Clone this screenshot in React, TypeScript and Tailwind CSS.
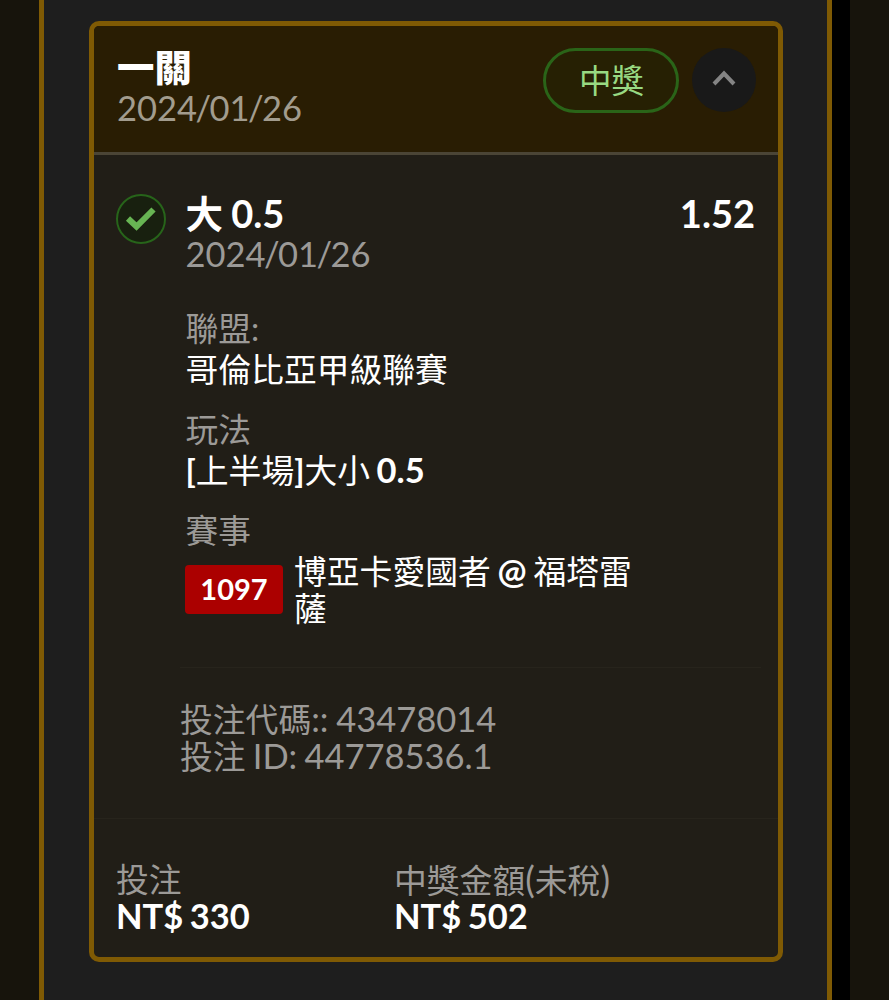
import type { ReactNode } from "react";

const Cjk = ({ children, className = "text-[32.8px]" }: { children: ReactNode; className?: string }) => (
  <span className={className}>{children}</span>
);

function DateText() {
  return (
    <>
      2024<span className="-ml-[1.5px] tracking-[-1.7px]">/</span>01<span className="-ml-[1.5px] tracking-[-1.7px]">/</span>26
    </>
  );
}

function Field({ label, children }: { label: string; children: ReactNode }) {
  return (
    <div className="mb-[20px]">
      <div className="h-[41px] whitespace-pre text-[32.8px] leading-[41px] text-[#9c9a97]">{label}</div>
      <div className="h-[40px] whitespace-pre leading-[40px] text-white">{children}</div>
    </div>
  );
}

function Amount({ label, value }: { label: ReactNode; value: string }) {
  return (
    <div>
      <div className="h-[37px] text-[32.8px] leading-[37px] whitespace-pre text-[#9c9a97]">{label}</div>
      <div className="h-[36px] text-[34.5px] leading-[36px] font-bold whitespace-pre text-white [word-spacing:-2px]">{value}</div>
    </div>
  );
}

export default function App() {
  return (
    <div className="flex h-[1000px] w-[889px] overflow-hidden bg-[#17140c] text-[34.5px] [font-family:Lato,'Noto_Sans_CJK_TC',sans-serif]">
      <div className="ml-[39px] w-[793px] shrink-0 border-x-[5px] border-[#7f5a04] bg-[#1e1e1e] pt-[21px] pl-[45px]">
        <section className="flex h-[941px] w-[694px] flex-col overflow-hidden rounded-[10px] border-[5px] border-[#7f5a04] bg-[#211e17]">
          <header className="flex h-[129px] shrink-0 items-start border-b-[3px] border-[#4b4536] bg-[#291d03] pl-[23px]">
            <div className="w-[426px] pt-[21px]">
              <div className="h-[41px] text-[37.4px] leading-[42px] font-black text-white">一關</div>
              <div className="h-[40px] leading-[40px] text-[#a29c8e]"><DateText /></div>
            </div>
            <div className="mt-[22px] flex h-[65px] w-[136px] items-center justify-center rounded-full border-[3px] border-[#2a6418] bg-[#262003] pl-px text-[32.5px] leading-[60px] text-[#98d982]">
              中獎
            </div>
            <div className="mt-[22px] ml-[13px] flex size-[64px] items-center justify-center rounded-full bg-[#191919]">
              <svg className="mb-[4px]" width="24" height="18" viewBox="0 0 24 18" fill="none" stroke="#848484" strokeWidth="4">
                <path d="M2 15 12 4.5 22 15" />
              </svg>
            </div>
          </header>

          <div className="flex h-[512px] shrink-0 pt-[38px] pl-[22px]">
            <div className="mt-px flex size-[50px] shrink-0 items-center justify-center rounded-full border-2 border-[#27641a] bg-[#18200f]">
              <svg width="32" height="28" viewBox="0 0 32 28" fill="none" stroke="#67b553" strokeWidth="6">
                <path d="M3 13.5 11.5 21.5 28.5 4.5" />
              </svg>
            </div>
            <div className="ml-[19.5px] w-[569.5px]">
              <div className="flex h-[41px] items-baseline justify-between text-[38px] leading-[41px] font-bold text-white">
                <span className="whitespace-pre [word-spacing:-1px]"><Cjk className="text-[37.5px]">大</Cjk> 0.5</span>
                <span>1.52</span>
              </div>
              <div className="mb-[34px] h-[40px] leading-[40px] text-[#9c9a97]"><DateText /></div>
              <Field label="聯盟:"><Cjk>哥倫比亞甲級聯賽</Cjk></Field>
              <Field label="玩法">
                <b className="text-[32.8px] font-bold">[</b><Cjk>上半場</Cjk><b className="text-[32.8px] font-bold">]</b><Cjk>大小</Cjk><b className="[word-spacing:-2px]"> 0.5</b>
              </Field>
              <div className="h-[41px] text-[32.7px] leading-[41px] text-[#9c9a97]">賽事</div>
              <div className="flex items-start">
                <div className="mt-[13.5px] -ml-[0.5px] flex h-[49px] w-[98px] items-center justify-center rounded-[4px] bg-[#ab0000] text-[29px] font-bold text-white">
                  1097
                </div>
                <div className="mt-[2px] ml-[11px] w-[350px] text-[32.8px] leading-[37px] whitespace-pre text-white">
                  博亞卡愛國者<b className="text-[34.5px] leading-none [word-spacing:-1.6px]"> @ </b>福塔雷<br />薩
                </div>
              </div>
            </div>
          </div>

          <div className="ml-[86px] h-[151px] w-[581px] shrink-0 border-t border-[#27241c] pt-[32px] text-[#9c9a97]">
            <div className="h-[37px] leading-[37px] whitespace-pre [word-spacing:-1px]"><Cjk>投注代碼</Cjk>:: 43478014</div>
            <div className="h-[37px] leading-[37px] whitespace-pre [word-spacing:-1.7px]"><Cjk>投注</Cjk> ID: 44778536.1</div>
          </div>

          <footer className="grid flex-1 grid-cols-[278px_1fr] border-t border-[#27241c] pt-[42px] pl-[22px]">
            <Amount label="投注" value="NT$ 330" />
            <Amount label={<>中獎金額<span className="text-[36px] leading-none">(</span>未稅<span className="text-[36px] leading-none">)</span></>} value="NT$ 502" />
          </footer>
        </section>
      </div>
      <div className="w-[18px] shrink-0 bg-black" />
    </div>
  );
}
